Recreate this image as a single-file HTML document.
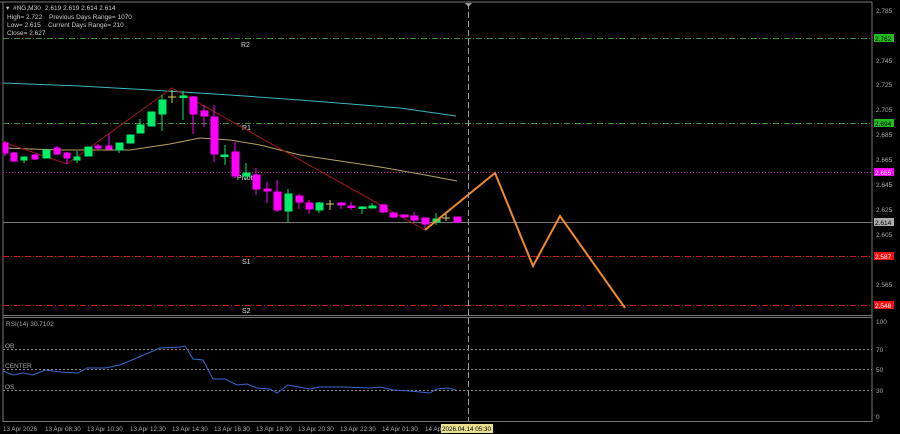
<!DOCTYPE html>
<html><head><meta charset="utf-8"><style>
html,body{margin:0;padding:0;background:#000;width:900px;height:434px;overflow:hidden}
svg{display:block}
text{font-family:"Liberation Sans",sans-serif;}
</style></head><body>
<svg width="900" height="434" viewBox="0 0 900 434" xmlns="http://www.w3.org/2000/svg">
<rect width="900" height="434" fill="#000"/>
<line x1="0" y1="2" x2="872" y2="2" stroke="#777" stroke-width="1"/>
<line x1="3" y1="2" x2="3" y2="422" stroke="#777" stroke-width="1"/>
<line x1="872" y1="2" x2="872" y2="422" stroke="#777" stroke-width="1"/>
<line x1="3" y1="315.5" x2="872" y2="315.5" stroke="#777"/>
<line x1="3" y1="317.5" x2="872" y2="317.5" stroke="#777"/>
<line x1="3" y1="421.5" x2="872" y2="421.5" stroke="#777"/>
<line x1="3" y1="38.5" x2="872" y2="38.5" stroke="#3a8a3a" stroke-dasharray="6,2,1,2"/>
<line x1="3" y1="123.5" x2="872" y2="123.5" stroke="#3a8a3a" stroke-dasharray="6,2,1,2"/>
<line x1="3" y1="172.5" x2="872" y2="172.5" stroke="#b020b0" stroke-dasharray="1,2"/>
<line x1="3" y1="222.5" x2="872" y2="222.5" stroke="#777"/>
<line x1="3" y1="256.5" x2="872" y2="256.5" stroke="#c02020" stroke-dasharray="6,2,1,2"/>
<line x1="3" y1="305.5" x2="872" y2="305.5" stroke="#c02020" stroke-dasharray="6,2,1,2"/>
<g fill="#ddd" font-size="7">
<text x="241" y="47">R2</text><text x="242" y="130">R1</text><text x="237" y="180">Pivot</text>
<text x="242" y="264">S1</text><text x="242" y="313">S2</text>
</g>
<polyline fill="none" stroke="#3bb5c0" stroke-width="1" points="3,83 80,86 150,90 230,95 300,100 400,108 456,116"/>
<polyline fill="none" stroke="#b8a060" stroke-width="1" points="3,148 60,150 130,150 170,144 200,138 230,140 260,145 300,155 340,161 380,167 420,174 457,181"/>
<polyline fill="none" stroke="#a01818" stroke-width="1" points="3,142 67,164 172,88 425,230"/>
<g stroke-width="1">
<g stroke="#ff00ff" fill="#ff00ff">
<line x1="5" y1="141" x2="5" y2="156"/><rect x="3" y="143" width="5" height="10"/>
<line x1="14" y1="152" x2="14" y2="162"/><rect x="11" y="153" width="6" height="8"/>
<line x1="35" y1="154" x2="35" y2="160"/><rect x="32" y="155" width="6" height="4"/>
<line x1="57" y1="146" x2="57" y2="155"/><rect x="54" y="148" width="6" height="6"/>
<line x1="67" y1="152" x2="67" y2="164"/><rect x="64" y="153" width="6" height="5"/>
<line x1="98" y1="144" x2="98" y2="150"/><rect x="95" y="146" width="6" height="2"/>
<line x1="109" y1="134" x2="109" y2="150"/><rect x="106" y="146" width="6" height="3"/>
<line x1="193" y1="96" x2="193" y2="134"/><rect x="190" y="97" width="7" height="17"/>
<line x1="204" y1="105" x2="204" y2="127"/><rect x="201" y="111" width="7" height="5"/>
<line x1="214" y1="105" x2="214" y2="162"/><rect x="211" y="117" width="7" height="37"/>
<line x1="235" y1="142" x2="235" y2="178"/><rect x="232" y="152" width="7" height="24"/>
<line x1="256" y1="168" x2="256" y2="195"/><rect x="253" y="175" width="7" height="14"/>
<line x1="267" y1="182" x2="267" y2="203"/><rect x="264" y="189" width="7" height="2"/>
<line x1="277" y1="180" x2="277" y2="212"/><rect x="274" y="192" width="7" height="18"/>
<line x1="299" y1="194" x2="299" y2="209"/><rect x="296" y="196" width="7" height="6"/>
<line x1="309" y1="200" x2="309" y2="214"/><rect x="306" y="203" width="7" height="6"/>
<line x1="341" y1="202" x2="341" y2="209"/><rect x="338" y="203" width="7" height="2"/>
<line x1="351" y1="202" x2="351" y2="210"/><rect x="348" y="206" width="7" height="1.5"/>
<line x1="383" y1="204" x2="383" y2="213"/><rect x="380" y="205" width="7" height="7"/>
<line x1="393" y1="212" x2="393" y2="218"/><rect x="390" y="213" width="7" height="4"/>
<line x1="404" y1="214" x2="404" y2="218"/><rect x="401" y="215" width="7" height="2"/>
<line x1="414" y1="212" x2="414" y2="222"/><rect x="411" y="216" width="7" height="4"/>
<line x1="425" y1="218" x2="425" y2="228"/><rect x="422" y="218" width="7" height="6"/>
<rect x="454" y="217" width="7" height="5"/>
</g>
<g stroke="#00ee66" fill="#00ee66">
<line x1="24" y1="157" x2="24" y2="163"/><rect x="21" y="157" width="6" height="3"/>
<rect x="43" y="150" width="7" height="8"/>
<line x1="77" y1="151" x2="77" y2="163"/><rect x="74" y="157" width="6" height="3"/>
<rect x="85" y="147" width="7" height="9"/>
<line x1="119" y1="143" x2="119" y2="153"/><rect x="116" y="143" width="7" height="7"/>
<rect x="127" y="135" width="7" height="8"/>
<line x1="140" y1="119" x2="140" y2="133"/><rect x="137" y="125" width="7" height="8"/>
<rect x="148" y="112" width="7" height="14"/>
<line x1="162" y1="95" x2="162" y2="131"/><rect x="159" y="100" width="7" height="14"/>
<line x1="183" y1="91" x2="183" y2="120"/><rect x="180" y="96" width="7" height="1.5"/>
<line x1="225" y1="145" x2="225" y2="165"/><rect x="221" y="155" width="7" height="1.5"/>
<line x1="246" y1="163" x2="246" y2="180"/><rect x="243" y="173" width="7" height="3"/>
<line x1="288" y1="189" x2="288" y2="222"/><rect x="285" y="194" width="7" height="17"/>
<line x1="319" y1="202" x2="319" y2="213"/><rect x="316" y="203" width="7" height="7"/>
<line x1="362" y1="206" x2="362" y2="214"/><rect x="359" y="207" width="7" height="1.5"/>
<line x1="372" y1="203" x2="372" y2="208"/><rect x="369" y="206" width="7" height="2"/>
<line x1="436" y1="213" x2="436" y2="225"/><rect x="433" y="219" width="7" height="3"/>
</g>
<g stroke="#d8d060">
<line x1="172" y1="90" x2="172" y2="103"/><line x1="168" y1="97" x2="176" y2="97"/>
<line x1="330" y1="200" x2="330" y2="210"/><line x1="326" y1="204" x2="334" y2="204"/>
<line x1="446" y1="214" x2="446" y2="221"/><line x1="442" y1="218" x2="450" y2="218"/>
</g>
</g>
<polyline fill="none" stroke="#f08a30" stroke-width="2" points="425,230 495,173 533,266 560,216 625,308"/>
<line x1="468.5" y1="3" x2="468.5" y2="421" stroke="#999" stroke-dasharray="6,3"/>
<polygon points="465,3 472,3 468.5,7" fill="#999"/>
<g fill="#cfcfcf" font-size="6.5">
<text x="6" y="10">▾</text><text x="13" y="10">#NG,M30</text><text x="45" y="10">2.619 2.619 2.614 2.614</text>
<text x="7" y="19">High= 2.722</text><text x="49" y="19">Previous Days Range= 1070</text>
<text x="7" y="27">Low= 2.615</text><text x="48" y="27">Current Days Range= 210</text>
<text x="7" y="35">Close= 2.627</text>
</g>
<g fill="#aaa" font-size="6.5">
<text x="876" y="13">2.785</text><text x="876" y="63">2.745</text><text x="876" y="87">2.725</text>
<text x="876" y="112">2.705</text><text x="876" y="137">2.685</text><text x="876" y="162">2.665</text>
<text x="876" y="187">2.645</text><text x="876" y="212">2.625</text><text x="876" y="237">2.605</text>
<text x="876" y="287">2.565</text>
</g>
<rect x="874" y="34" width="20" height="8" fill="#22bb22"/><text x="875" y="41" font-size="6.5" fill="#000">2.762</text>
<rect x="874" y="119" width="20" height="8" fill="#22bb22"/><text x="875" y="126" font-size="6.5" fill="#000">2.694</text>
<rect x="874" y="168" width="20" height="8" fill="#ff00ff"/><text x="875" y="175" font-size="6.5" fill="#fff">2.655</text>
<rect x="874" y="218" width="20" height="8" fill="#aaa"/><text x="875" y="225" font-size="6.5" fill="#000">2.614</text>
<rect x="874" y="252" width="20" height="8" fill="#ee1111"/><text x="875" y="259" font-size="6.5" fill="#fff">2.587</text>
<rect x="874" y="301" width="20" height="8" fill="#ee1111"/><text x="875" y="308" font-size="6.5" fill="#fff">2.548</text>
<g stroke="#888" stroke-dasharray="2,2">
<line x1="3" y1="349.5" x2="872" y2="349.5"/><line x1="3" y1="369.5" x2="872" y2="369.5"/><line x1="3" y1="390.5" x2="872" y2="390.5"/>
</g>
<g fill="#aaa" font-size="6.5">
<text x="6" y="326">RSI(14) 30.7102</text>
<text x="5" y="348">OB</text><text x="5" y="368">CENTER</text><text x="5" y="389">OS</text>
<text x="876" y="324">100</text><text x="876" y="352">70</text><text x="876" y="372">50</text><text x="876" y="393">30</text><text x="876" y="419">0</text>
</g>
<polyline fill="none" stroke="#3a6ad0" stroke-width="1" points="3,371 13,375 23,373 33,375 45,370 60,372 78,373 87,368 105,368 120,365 160,348 180,347 185,346 193,359 203,360 213,379 225,379 237,385 247,384 257,388 270,389 277,393 288,385 310,389 320,387 343,387 370,388 380,387 393,390 410,391 430,393 437,389 448,388 456,390"/>
<g fill="#aaa" font-size="6.3">
<text x="3" y="431">13 Apr 2026</text><text x="45" y="431">13 Apr 08:30</text><text x="87" y="431">13 Apr 10:30</text>
<text x="130" y="431">13 Apr 12:30</text><text x="172" y="431">13 Apr 14:30</text><text x="214" y="431">13 Apr 16:30</text>
<text x="256" y="431">13 Apr 18:30</text><text x="298" y="431">13 Apr 20:30</text><text x="340" y="431">13 Apr 22:30</text>
<text x="382" y="431">14 Apr 01:30</text><text x="425" y="431">14 Ap</text>
</g>
<rect x="441" y="424" width="52" height="9" fill="#e8e090"/>
<text x="442" y="431" font-size="6.3" fill="#000">2026.04.14 05:30</text>
</svg>
</body></html>
